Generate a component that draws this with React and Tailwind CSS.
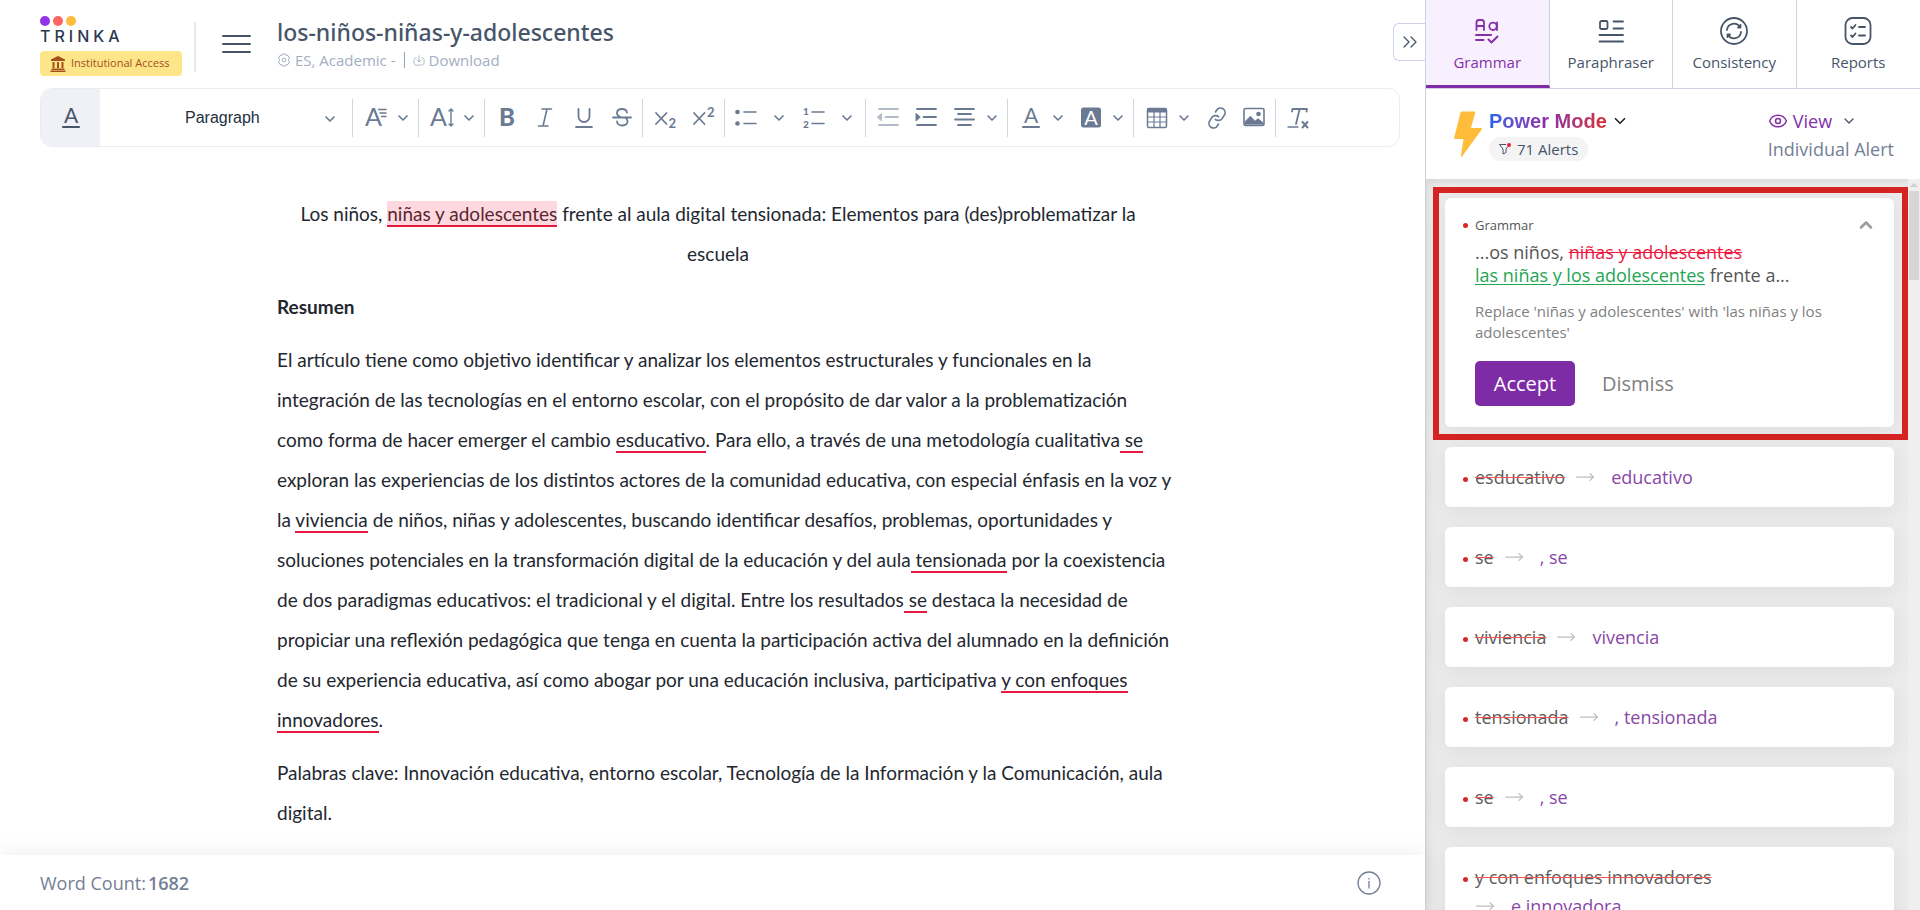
import {
  ChevronDown,
  ChevronUp,
  ChevronsRight,
  Eye,
  Link as LinkIcon,
  MoveRight,
} from "lucide-react";

const uiFont = "font-['Open_Sans','Noto_Sans',sans-serif]";

const alerts = [
  { id: 1, wrong: "esducativo", right: "educativo" },
  { id: 2, wrong: "se", right: ", se" },
  { id: 3, wrong: "viviencia", right: "vivencia" },
  { id: 4, wrong: "tensionada", right: ", tensionada" },
  { id: 5, wrong: "se", right: ", se" },
  { id: 6, wrong: "y con enfoques innovadores", right: "e innovadora", stacked: true },
];

/* ---------- toolbar icons ---------- */

function Icon({ children, className = "" }) {
  return (
    <svg
      viewBox="0 0 22 22"
      className={`size-[22px] overflow-visible ${className}`}
      fill="none"
      stroke="currentColor"
      strokeWidth="1.6"
      strokeLinecap="round"
      strokeLinejoin="round"
      aria-hidden="true"
    >
      {children}
    </svg>
  );
}

function Glyph({ children, ...props }) {
  return (
    <text fill="currentColor" stroke="none" fontFamily="Lato, sans-serif" {...props}>
      {children}
    </text>
  );
}

const FontFamilyIcon = () => (
  <Icon>
    <Glyph x="0" y="19" fontSize="25">A</Glyph>
    <path d="M13.5 2.5H21M15 6h6M16.500 9.500H21" strokeWidth="1.5" />
  </Icon>
);

const FontSizeIcon = () => (
  <Icon>
    <Glyph x="-1" y="19" fontSize="25">A</Glyph>
    <path d="M20 2.500v16M18 4l2-2 2 2M18 17l2 2 2-2" strokeWidth="1.4" />
  </Icon>
);

const BoldIcon = () => (
  <Icon>
    <Glyph x="2" y="19" fontSize="24" fontWeight="900">B</Glyph>
  </Icon>
);

const ItalicIcon = () => (
  <Icon>
    <path d="M7 2h9.500M3.500 19H13M12 2 8 19" strokeWidth="1.6" />
  </Icon>
);

const UnderlineIcon = () => (
  <Icon>
    <path d="M5.500 2v7.500a5.500 5.500 0 0 0 11 0V2M3 20h16" strokeWidth="1.8" />
  </Icon>
);

const StrikeIcon = () => (
  <Icon>
    <path d="M16 5.500C15.500 3 13.500 2 11 2 8 2 6 3.500 6 6c0 1.800 1 3 3 3.800M2 10.500h18M14.500 11c1.500.8 2 2 2 3.300 0 2.800-2.300 4.200-5.200 4.200-3 0-5-1.500-5.300-4" strokeWidth="1.8" />
  </Icon>
);

const SubIcon = () => (
  <Icon>
    <path d="m1 6 10.500 11M11.500 6 1 17" strokeWidth="1.8" />
    <Glyph x="13.500" y="21" fontSize="13" fontWeight="700">2</Glyph>
  </Icon>
);

const SupIcon = () => (
  <Icon>
    <path d="m1 6 10.500 11M11.500 6 1 17" strokeWidth="1.8" />
    <Glyph x="14" y="9.500" fontSize="13" fontWeight="700">2</Glyph>
  </Icon>
);

const BulletsIcon = () => (
  <Icon>
    <circle cx="2.500" cy="5" r="2.300" fill="currentColor" stroke="none" />
    <circle cx="2.500" cy="16.500" r="2.300" fill="currentColor" stroke="none" />
    <path d="M9 5h12M9 16.500h12" />
  </Icon>
);

const NumbersIcon = () => (
  <Icon>
    <Glyph x="0" y="8" fontSize="10" fontWeight="900">1</Glyph>
    <Glyph x="0" y="20.500" fontSize="10" fontWeight="900">2</Glyph>
    <path d="M9 5h12M9 16.500h12" />
  </Icon>
);

const OutdentIcon = () => (
  <Icon className="opacity-50">
    <path d="M1 2h19M7.500 10H20M1 18h19" strokeWidth="1.8" />
    <path d="M-.5 10 3.500 6.500v7z" fill="currentColor" strokeWidth="1" />
  </Icon>
);

const IndentIcon = () => (
  <Icon>
    <path d="M1 2h19M7.500 10H20M1 18h19" strokeWidth="1.8" />
    <path d="M4 10 0 6.500v7z" fill="currentColor" strokeWidth="1" />
  </Icon>
);

const AlignIcon = () => (
  <Icon>
    <path d="M1 2h19M4 7h13M1 12.500h19M4 18h13" strokeWidth="1.8" />
  </Icon>
);

const TextColorIcon = () => (
  <Icon>
    <Glyph x="11" y="16" fontSize="21" textAnchor="middle">A</Glyph>
    <path d="M3 20h16" strokeWidth="2.200" />
  </Icon>
);

const FillColorIcon = () => (
  <Icon>
    <rect x="1" y="0.500" width="20" height="20" rx="2.500" fill="currentColor" stroke="none" />
    <text x="11" y="17.500" fontSize="20" textAnchor="middle" fill="white" stroke="none" fontFamily="Lato, sans-serif">
      A
    </text>
  </Icon>
);

const TableIcon = () => (
  <Icon>
    <rect x="1.500" y="1.500" width="19" height="19" rx="1.500" strokeWidth="1.500" />
    <path d="M2 2h18v3H2z" fill="currentColor" strokeWidth="1" />
    <path d="M2 10h18M2 15h18M8 5v15M14 5v15" strokeWidth="1.200" />
  </Icon>
);

const PictureIcon = () => (
  <Icon>
    <rect x="0" y="1.500" width="20" height="17" rx="1.500" />
    <circle cx="14.500" cy="7" r="2.300" fill="currentColor" stroke="none" />
    <path d="M1 17.500v-3L6.500 9l4.500 5 3-2.500 5 4v2z" fill="currentColor" strokeWidth="0.500" />
  </Icon>
);

const ClearIcon = () => (
  <Icon>
    <path d="M4 4.500 4.500 2H19l-.5 2.500M11.500 2.500 8 17" strokeWidth="1.800" />
    <path d="M0 20h10" strokeWidth="1.300" />
    <path d="m14.500 15 5 5.500M19.500 15l-5 5.500" strokeWidth="2" />
  </Icon>
);

function ToolGroup({ children }) {
  return (
    <div className="flex h-[38px] items-center gap-4 border-r border-gray-300 pr-[9px] pl-3 last:border-r-0">
      {children}
    </div>
  );
}

function Tool({ label, icon, dropdown }) {
  return (
    <button type="button" aria-label={label} className="flex items-center gap-2.5">
      {icon}
      {dropdown && <ChevronDown className="-mx-0.5 size-4" strokeWidth={2.5} />}
    </button>
  );
}

/* ---------- editor ---------- */

function Logo() {
  return (
    <div>
      <div className="flex gap-[3px]">
        <span className="size-2.5 rounded-full bg-[#9333ea]" />
        <span className="size-2.5 rounded-full bg-[#ff6464]" />
        <span className="size-2.5 rounded-full bg-[#ffbc3a]" />
      </div>
      <p className="font-['Inter',sans-serif] text-base leading-5 font-medium tracking-[4px] text-[#2c3852]">TRINKA</p>
    </div>
  );
}

function EditorHeader() {
  return (
    <header className="flex h-[88px] shrink-0 items-start pl-10">
      <div className="pt-4">
        <Logo />
        <div className="mt-[5px] flex h-[25px] w-[142px] items-center gap-[5px] rounded bg-[#fde68a] pl-2.5 text-[11px] whitespace-nowrap text-[#a1501b]">
          <svg viewBox="0 0 16 16" className="size-4 shrink-0" fill="currentColor" aria-hidden="true">
            <path d="M8 0 1 3.500V5h14V3.500zM2.500 6h2v6h-2zM7 6h2v6H7zM11.500 6h2v6h-2zM1.500 12.500h13V14h-13zM.5 14.500h15V16H.5z" />
          </svg>
          Institutional Access
        </div>
      </div>
      <div className="mt-[22px] ml-3 h-[50px] w-0.5 bg-gray-200" />
      <button type="button" aria-label="Menu" className="mt-[35px] ml-[26px] flex w-[29px] flex-col gap-1.5">
        <span className="h-0.5 w-full rounded bg-[#475569]" />
        <span className="h-0.5 w-full rounded bg-[#475569]" />
        <span className="h-0.5 w-full rounded bg-[#475569]" />
      </button>
      <div className="ml-[26px] pt-4">
        <h1 className="font-['Noto_Sans',sans-serif] text-[23px] leading-8 font-medium text-[#475569]">
          los-niños-niñas-y-adolescentes
        </h1>
        <div className="flex items-center text-[15px] leading-6 text-[#a3aec2]">
          <button type="button" className="flex items-center gap-1">
            <svg viewBox="0 0 14 14" className="size-[14px]" fill="none" stroke="currentColor" aria-hidden="true">
              <path d="M5.500 1h3l.7 1.500 1.700-.1L12.500 5l-1 1.500v1l1 1.500-1.600 2.600-1.700-.1-.7 1.500h-3l-.7-1.500-1.700.1L1.500 9l1-1.500v-1L1.500 5l1.600-2.600 1.700.1z" />
              <circle cx="7" cy="7" r="1.800" />
            </svg>
            ES, Academic -
          </button>
          <span className="mx-2 h-4 w-px bg-[#94a3b8]" />
          <button type="button" className="flex items-center gap-1">
            <svg viewBox="0 0 14 14" className="size-3" fill="none" stroke="currentColor" strokeLinecap="round" aria-hidden="true">
              <path d="M3.500 4.500C1.500 4.500 1 6 1 8v1c0 3 1 4 4 4h4c3 0 4-1 4-4V8c0-2-.5-3.500-2.500-3.500M7 2v7M4.800 7.200 7 9.300l2.200-2.100" />
            </svg>
            Download
          </button>
        </div>
      </div>
    </header>
  );
}

function Toolbar() {
  return (
    <div className="mr-5 ml-10 flex h-[59px] shrink-0 items-center overflow-hidden rounded-xl border border-[#e6eeee] text-[#6b7a93] xl:mr-[25px]">
      <button type="button" aria-label="Text formatting" className="flex h-full w-[59px] items-center justify-center bg-[#eff1f6] text-[#475569]">
        <TextColorIcon />
      </button>
      <div className="relative w-[253px] border-r border-gray-300">
        <select
          aria-label="Block style"
          className="h-[38px] w-full appearance-none bg-transparent pl-[85px] font-['Liberation_Sans',Arial,sans-serif] text-base text-[#222f3e]"
        >
          <option>Paragraph</option>
          <option>Heading 1</option>
          <option>Heading 2</option>
        </select>
        <ChevronDown className="pointer-events-none absolute top-3 right-3.5 size-4" strokeWidth={2.5} />
      </div>
      <ToolGroup>
        <Tool label="Font family" icon={<FontFamilyIcon />} dropdown />
      </ToolGroup>
      <ToolGroup>
        <Tool label="Font size" icon={<FontSizeIcon />} dropdown />
      </ToolGroup>
      <ToolGroup>
        <Tool label="Bold" icon={<BoldIcon />} />
        <Tool label="Italic" icon={<ItalicIcon />} />
        <Tool label="Underline" icon={<UnderlineIcon />} />
        <Tool label="Strikethrough" icon={<StrikeIcon />} />
      </ToolGroup>
      <ToolGroup>
        <Tool label="Subscript" icon={<SubIcon />} />
        <Tool label="Superscript" icon={<SupIcon />} />
      </ToolGroup>
      <div className="flex h-[38px] items-center gap-[18px] border-r border-gray-300 pr-3 pl-2.5">
        <button type="button" aria-label="Bullet list" className="flex items-center gap-4">
          <BulletsIcon />
          <ChevronDown className="-mx-0.5 size-4" strokeWidth={2.5} />
        </button>
        <button type="button" aria-label="Numbered list" className="flex items-center gap-4">
          <NumbersIcon />
          <ChevronDown className="-mx-0.5 size-4" strokeWidth={2.5} />
        </button>
      </div>
      <ToolGroup>
        <Tool label="Decrease indent" icon={<OutdentIcon />} />
        <Tool label="Increase indent" icon={<IndentIcon />} />
        <Tool label="Align" icon={<AlignIcon />} dropdown />
      </ToolGroup>
      <ToolGroup>
        <Tool label="Text color" icon={<TextColorIcon />} dropdown />
        <Tool label="Background color" icon={<FillColorIcon />} dropdown />
      </ToolGroup>
      <ToolGroup>
        <Tool label="Table" icon={<TableIcon />} dropdown />
        <Tool label="Link" icon={<LinkIcon className="size-[22px] -rotate-12" strokeWidth={1.8} />} />
        <Tool label="Image" icon={<PictureIcon />} />
      </ToolGroup>
      <ToolGroup>
        <Tool label="Clear formatting" icon={<ClearIcon />} />
      </ToolGroup>
    </div>
  );
}

function Mark({ children, active }) {
  return (
    <span className={`border-b-2 border-[#e8193f] ${active ? "bg-[#fdd9df] pt-px text-[#5a2530]" : ""}`}>{children}</span>
  );
}

function Document() {
  return (
    <article className="min-h-0 flex-1 overflow-hidden pt-[47px] pl-[277px] font-['Lato','Carlito',sans-serif] text-[19px] leading-10 whitespace-nowrap text-[#23272f]">
      <p className="w-[882px] text-center">
        Los niños, <Mark active>niñas y adolescentes</Mark> frente al aula digital tensionada: Elementos para (des)problematizar la
        <br />
        escuela
      </p>
      <p className="mt-[13px] font-bold">Resumen</p>
      <p className="mt-[13px]">
        El artículo tiene como objetivo identificar y analizar los elementos estructurales y funcionales en la
        <br />
        integración de las tecnologías en el entorno escolar, con el propósito de dar valor a la problematización
        <br />
        como forma de hacer emerger el cambio <Mark>esducativo</Mark>. Para ello, a través de una metodología cualitativa
        <Mark> se</Mark>
        <br />
        exploran las experiencias de los distintos actores de la comunidad educativa, con especial énfasis en la voz y
        <br />
        la <Mark>viviencia</Mark> de niños, niñas y adolescentes, buscando identificar desafíos, problemas, oportunidades y
        <br />
        soluciones potenciales en la transformación digital de la educación y del aula<Mark> tensionada</Mark> por la coexistencia
        <br />
        de dos paradigmas educativos: el tradicional y el digital. Entre los resultados<Mark> se</Mark> destaca la necesidad de
        <br />
        propiciar una reflexión pedagógica que tenga en cuenta la participación activa del alumnado en la definición
        <br />
        de su experiencia educativa, así como abogar por una educación inclusiva, participativa <Mark>y con enfoques</Mark>
        <br />
        <Mark>innovadores</Mark>.
      </p>
      <p className="mt-[13px]">
        Palabras clave: Innovación educativa, entorno escolar, Tecnología de la Información y la Comunicación, aula
        <br />
        digital.
      </p>
    </article>
  );
}

function EditorFooter() {
  return (
    <footer className="flex h-[55px] shrink-0 items-center justify-between bg-white pr-11 pl-10 text-[#748096] shadow-[0_-4px_20px_rgba(0,0,0,0.06)]">
      <p className="text-lg">
        Word Count:<span className="ml-0.5 font-semibold">1682</span>
      </p>
      <button type="button" aria-label="Information">
        <svg viewBox="0 0 24 24" className="size-6" fill="none" stroke="currentColor" strokeWidth="1.300" aria-hidden="true">
          <circle cx="12" cy="12" r="11" />
          <path d="M12 10v7.500M12 7v1.600" />
        </svg>
      </button>
    </footer>
  );
}

/* ---------- side panel ---------- */

function TabIcon({ children }) {
  return (
    <svg viewBox="0 0 28 28" className="size-7" fill="none" stroke="currentColor" strokeWidth="1.800" strokeLinecap="round" strokeLinejoin="round" aria-hidden="true">
      {children}
    </svg>
  );
}

const tabs = [
  {
    name: "Grammar",
    icon: (
      <TabIcon>
        <path d="M3.500 13V5.500Q3.500 3 6 3h2.500Q11 3 11 5.500V13M3.500 9H11M24 5.500V13" />
        <circle cx="20" cy="9.300" r="3.700" />
        <path d="M3 18h15M3 23h7.500M15.500 22.500l3 3 6-6" strokeWidth="2" />
      </TabIcon>
    ),
  },
  {
    name: "Paraphraser",
    icon: (
      <TabIcon>
        <rect x="3" y="4" width="7.500" height="8" rx="1.500" />
        <path d="M16.500 4.500H26M16.500 11.500H26M2.500 18H26M2.500 24.500H26" />
      </TabIcon>
    ),
  },
  {
    name: "Consistency",
    icon: (
      <TabIcon>
        <circle cx="14" cy="14" r="13" />
        <path d="M7 13A7 7 0 0 1 20 10.200M20.500 8v2.500H18M21 15A7 7 0 0 1 8 17.800M7.500 20v-2.500H10" />
      </TabIcon>
    ),
  },
  {
    name: "Reports",
    icon: (
      <TabIcon>
        <rect x="1.500" y="1" width="25" height="26" rx="7" />
        <path d="m7 10 1.500 1.500 3-3.500M15 10h6M7 18.500 8.500 20l3-3.500M15 18.500h6" />
      </TabIcon>
    ),
  },
];

function Tabs() {
  return (
    <nav className="grid h-[89px] shrink-0 grid-cols-4 border-b border-[#ccd3e8] bg-white">
      {tabs.map((tab, i) => (
        <button
          key={tab.name}
          type="button"
          className={`flex flex-col items-center gap-[7px] border-r pt-[17px] text-[15px] leading-5 last:border-r-0 ${
            i === 0
              ? "border-r-[#ccd3e8] border-b-3 border-b-[#7e2ba6] bg-[#f9f0ff] text-[#8330a9]"
              : "border-[#ccd3e8] text-[#475569]"
          }`}
        >
          {tab.icon}
          {tab.name}
        </button>
      ))}
    </nav>
  );
}

function PanelHeader() {
  return (
    <div className="flex h-[90px] shrink-0 items-start bg-white pt-[18px] pr-[26px] pl-7">
      <svg viewBox="0 0 28 46" className="mt-1 h-[46px] w-7" fill="#ffbc3a" aria-hidden="true">
        <path d="M8 .5h12.500q1 0 .7 1L17 17h10q1.500 0 .7 1.500L8 45.500q-1.500 1-1-1L9.500 28H1Q0 28 .2 26.500L6.500 1.500Q7 .5 8 .5z" />
      </svg>
      <div className="mt-0.5 ml-[7px]">
        <button type="button" className="flex items-center gap-1">
          <span className="bg-linear-to-r from-[#2563eb] via-[#8b2ba6] to-[#dc2626] bg-clip-text font-['Liberation_Sans',Arial,sans-serif] text-xl leading-6 font-bold text-transparent">
            Power Mode
          </span>
          <ChevronDown className="size-[18px] text-[#1f2430]" strokeWidth={2.2} />
        </button>
        <button type="button" className="mt-1 flex h-6 items-center gap-1.5 rounded-full bg-[#f4f4f5] px-2.5 text-[15px] text-[#475569]">
          <svg viewBox="0 0 12 12" className="size-3" fill="none" stroke="#475569" strokeLinejoin="round" aria-hidden="true">
            <path d="M7 1.500H.5L4 6v5l3-1.500V6l2-2.500" />
            <circle cx="10" cy="2" r="2" fill="#ef1c2e" stroke="none" />
          </svg>
          71 Alerts
        </button>
      </div>
      <div className="ml-auto">
        <button type="button" className="flex items-center gap-[5px] text-lg leading-7 text-[#8330a9]">
          <Eye className="size-5" strokeWidth={1.8} />
          View
          <ChevronDown className="ml-1 size-4 text-[#475569]" />
        </button>
        <p className="text-lg leading-7 text-[#748096]">Individual Alert</p>
      </div>
    </div>
  );
}

function Dot() {
  return <span className="size-[5px] shrink-0 rounded-full bg-[#dc2626]" />;
}

const cardClass = "rounded-md bg-white shadow-[0_4px_20px_rgba(0,0,0,0.06)]";

function ActiveAlert() {
  return (
    <section className="mr-3 ml-[7px] border-6 border-[#d62424] p-1.5 pt-[5px] pr-2 pb-[7px]">
      <div className={`${cardClass} px-[18px] pt-[17px] pb-[21px]`}>
        <div className="flex items-center">
          <Dot />
          <span className="ml-[7px] text-[13px] leading-5 text-[#555]">Grammar</span>
          <button type="button" aria-label="Collapse alert" className="ml-auto">
            <ChevronUp className="size-5 text-[#9c9c9c]" strokeWidth={3} />
          </button>
        </div>
        <div className="pl-3">
          <p className="mt-1.5 text-lg leading-[23px] text-[#555]">
            ...os niños, <del className="font-medium text-[#ed1941]">niñas y adolescentes</del>
            <br />
            <ins className="font-medium text-[#22a652] underline-offset-2">las niñas y los adolescentes</ins> frente a...
          </p>
          <p className="mt-3.5 text-[15px] leading-[21px] text-[#808080]">
            Replace 'niñas y adolescentes' with 'las niñas y los adolescentes'
          </p>
          <div className="mt-[18px] flex items-center">
            <button type="button" className="h-[45px] w-[100px] rounded-[5px] bg-[#7e2ba6] text-xl font-medium text-white">
              Accept
            </button>
            <button type="button" className="ml-[27px] text-xl text-[#808080]">Dismiss</button>
          </div>
        </div>
      </div>
    </section>
  );
}

function AlertCard({ alert }) {
  return (
    <li className={`${cardClass} flex min-h-[60px] items-start px-[18px] pt-[18px] pb-4 text-lg leading-6`}>
      <span className="flex h-6 items-center pt-1">
        <Dot />
      </span>
      <div className={`ml-[7px] flex ${alert.stacked ? "flex-col gap-[5px]" : ""}`}>
        <del className="text-[#5c5c5c] decoration-[#ff5252]">{alert.wrong}</del>
        <div className="flex items-center">
          <MoveRight
            className={`size-5 text-[#bdbdbd] ${alert.stacked ? "mr-4" : "mr-4 ml-2.5"}`}
            strokeWidth={1.5}
          />
          <button type="button" className="text-[#8a47a8]">{alert.right}</button>
        </div>
      </div>
    </li>
  );
}

export default function App() {
  return (
    <div className={`flex h-screen overflow-hidden bg-white ${uiFont}`}>
      <main className="relative flex min-w-0 flex-1 flex-col">
        <EditorHeader />
        <Toolbar />
        <Document />
        <EditorFooter />
        <button
          type="button"
          aria-label="Hide panel"
          className="absolute top-[23px] right-0 flex h-[38px] w-8 items-center justify-center rounded-l-md border border-r-0 border-[#ccd3e8] bg-white text-[#475569]"
        >
          <ChevronsRight className="size-6" strokeWidth={1.3} />
        </button>
      </main>
      <aside className="flex w-[495px] shrink-0 flex-col border-l border-[#ccd0da] bg-[#ebebeb]">
        <Tabs />
        <PanelHeader />
        <div className="flex min-h-0 flex-1 shadow-[inset_0_4px_6px_rgba(0,0,0,0.06),inset_6px_0_8px_rgba(0,0,0,0.03)]">
          <div className="min-w-0 flex-1 overflow-x-hidden overflow-y-auto pt-2 [scrollbar-width:none]">
            <ActiveAlert />
            <ul className="mt-[7px] mr-[26px] ml-[19px] flex flex-col gap-5">
              {alerts.map((alert) => (
                <AlertCard key={alert.id} alert={alert} />
              ))}
            </ul>
          </div>
          <div className="-ml-3 flex w-3 flex-col items-center bg-[#efefef] pt-1">
            <svg viewBox="0 0 8 4" className="h-1 w-2" fill="#cfcfcf" aria-hidden="true">
              <path d="M4 0l4 4H0z" />
            </svg>
            <div className="mt-1 h-[89px] w-2.5 bg-[#d6d6d6]" />
          </div>
        </div>
      </aside>
    </div>
  );
}
